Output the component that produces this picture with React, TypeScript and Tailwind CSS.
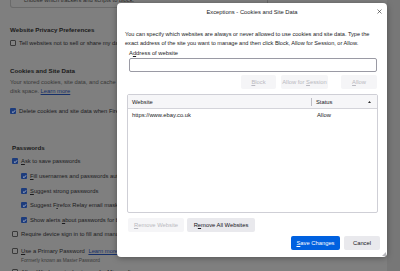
import React from "react";

const font = { fontFamily: '"Liberation Sans", Arial, sans-serif' };

function PageBox({ checked }: { checked?: boolean }) {
  return checked ? (
    <span className="flex h-[6px] w-[6px] shrink-0 items-center justify-center rounded-[1px] bg-[#1d3c7c]">
      <svg width="5" height="5" viewBox="0 0 10 10">
        <path d="M2 5.2 L4.2 7.3 L8 2.8" fill="none" stroke="#c9cdd6" strokeWidth="1.6" />
      </svg>
    </span>
  ) : (
    <span className="h-[6px] w-[6px] shrink-0 rounded-[1px] border border-[#3a3a3a] bg-[#828282]" />
  );
}

function PageRow({
  checked,
  indent,
  children,
  top,
}: {
  checked?: boolean;
  indent: string;
  children: React.ReactNode;
  top: string;
}) {
  return (
    <div className={`flex items-center gap-[3px] whitespace-nowrap ${indent} ${top}`}>
      <PageBox checked={checked} />
      <span>{children}</span>
    </div>
  );
}

function Btn({
  children,
  w,
  kind = "normal",
}: {
  children: React.ReactNode;
  w: string;
  kind?: "normal" | "disabled" | "primary";
}) {
  const look =
    kind === "primary"
      ? "bg-[#0061e0] text-white"
      : kind === "disabled"
      ? "bg-[#f5f5f7] text-[#b9b9c0]"
      : "bg-[#e9e9ed] text-[#15141a]";
  return (
    <div
      className={`flex h-[14px] items-center justify-center whitespace-nowrap rounded-[2px] ${w} ${look}`}
    >
      {children}
    </div>
  );
}

export default function App() {
  return (
    <div
      className="relative h-[271px] w-[400px] overflow-hidden bg-[#7f7f7f] text-[5.8px] leading-[8px] text-[#1b1b1d]"
      style={font}
    >
      {/* settings page behind the dialog */}
      <div className="flex flex-col">
        <div className="ml-[10px] h-[8px] w-[258px] rounded-b-[3px] border-x border-b border-[#6a6a6a]">
          <div className="ml-[13px] -mt-[4px] text-[#2a2a2a]">choose which trackers and scripts to block.</div>
        </div>

        <div className="ml-[10px] mt-[18px] text-[6.2px] font-bold text-[#1a1a1a]">
          Website Privacy Preferences
        </div>
        <PageRow indent="ml-[10px]" top="mt-[5px]">
          Tell websites not to sell or share my data
        </PageRow>

        <div className="ml-[10px] mt-[20px] text-[6.2px] font-bold text-[#1a1a1a]">Cookies and Site Data</div>
        <div className="ml-[10px] mt-[3px] text-[#383838]">
          Your stored cookies, site data, and cache are currently using
        </div>
        <div className="ml-[10px] mt-[1px] text-[#383838]">
          disk space. <span className="text-[#16306a] underline">Learn more</span>
        </div>
        <PageRow checked indent="ml-[10px]" top="mt-[12px]">
          Delete cookies and site data when Firefox is closed
        </PageRow>

        <div className="ml-[12px] mt-[29px] text-[6.2px] font-bold text-[#1a1a1a]">Passwords</div>
        <PageRow checked indent="ml-[12px]" top="mt-[5px]">
          <span className="underline decoration-[0.5px]">A</span>sk to save passwords
        </PageRow>
        <PageRow checked indent="ml-[21px]" top="mt-[7px]">
          <span className="underline decoration-[0.5px]">F</span>ill usernames and passwords automatically
        </PageRow>
        <PageRow checked indent="ml-[21px]" top="mt-[7px]">
          <span className="underline decoration-[0.5px]">S</span>uggest strong passwords
        </PageRow>
        <PageRow checked indent="ml-[21px]" top="mt-[6px]">
          Suggest F<span className="underline decoration-[0.5px]">i</span>refox Relay email masks to protect
        </PageRow>
        <PageRow checked indent="ml-[21px]" top="mt-[7px]">
          Show alerts <span className="underline decoration-[0.5px]">a</span>bout passwords for breached websites
        </PageRow>
        <PageRow indent="ml-[12px]" top="mt-[6px]">
          Require device sign in to fill and manage passwords
        </PageRow>
        <PageRow indent="ml-[12px]" top="mt-[9px]">
          <span>
            <span className="underline decoration-[0.5px]">U</span>se a Primary Password{" "}
            <span className="ml-[2px] text-[#16306a] underline">Learn more</span>
          </span>
        </PageRow>
        <div className="ml-[21px] mt-[2px] text-[4.8px] text-[#3a3a3a]">Formerly known as Master Password</div>
        <PageRow indent="ml-[12px]" top="mt-[3px]">
          Allow Windows single sign-on for Microsoft
        </PageRow>
      </div>

      {/* darker strip at right edge */}
      <div className="absolute right-0 top-0 h-full w-[13px] bg-[#777777]" />

      {/* exceptions dialog */}
      <div className="absolute left-[117px] top-[3px] flex h-[254px] w-[270px] flex-col rounded-[4px] bg-white shadow-[0_1px_6px_rgba(0,0,0,0.35)]">
        <div className="relative flex h-[18px] shrink-0 items-center justify-center text-[#1b1b1d]">
          Exceptions - Cookies and Site Data
          <svg className="absolute right-[5px] top-[6px]" width="5" height="5" viewBox="0 0 10 10">
            <path d="M1 1 L9 9 M9 1 L1 9" stroke="#2b2b2b" strokeWidth="1.2" />
          </svg>
        </div>

        <div className="flex flex-1 flex-col pl-[8px] pr-[8px] pt-[9px]">
          <p className="text-[5.6px] leading-[8.5px] text-[#1b1b1d]">
            You can specify which websites are always or never allowed to use cookies and site data. Type the exact
            address of the site you want to manage and then click Block, Allow for Session, or Allow.
          </p>
          <div className="ml-[4px] mt-[2px]">
            A<span className="underline decoration-[0.5px]">d</span>dress of website
          </div>
          <div className="ml-[4px] mt-[1px] h-[14px] w-[248px] rounded-[2px] border border-[#9a9aa4]" />

          <div className="mr-[2px] mt-[3px] flex justify-end">
            <Btn w="w-[35px]" kind="disabled">
              <span className="underline decoration-[0.5px]">B</span>lock
            </Btn>
            <div className="ml-[5px]">
              <Btn w="w-[47px]" kind="disabled">
                Allow for&nbsp;<span className="underline decoration-[0.5px]">S</span>ession
              </Btn>
            </div>
            <div className="ml-[13px]">
              <Btn w="w-[36px]" kind="disabled">
                <span className="underline decoration-[0.5px]">A</span>llow
              </Btn>
            </div>
          </div>

          <div className="ml-[2px] mt-[5px] flex h-[119px] w-[251px] flex-col rounded-[2px] border border-[#cfcfd6]">
            <div className="flex h-[14px] shrink-0 items-center border-b border-[#d4d4da] bg-[#f6f6f8]">
              <div className="flex w-[184px] items-center border-r border-[#bdbdc4] pl-[4px] leading-[8px]">
                Website
              </div>
              <div className="flex flex-1 items-center justify-between pl-[4px] pr-[6px]">
                Status
                <svg width="3" height="2" viewBox="0 0 6 4">
                  <path d="M0 4 L3 0 L6 4 Z" fill="#2b2b2b" />
                </svg>
              </div>
            </div>
            <div className="mt-[2px] flex h-[8px] items-center">
              <div className="w-[184px] pl-[4px]">https://www.ebay.co.uk</div>
              <div className="pl-[5px]">Allow</div>
            </div>
          </div>

          <div className="ml-[3px] mt-[5px] flex gap-[3px]">
            <Btn w="w-[56px]" kind="disabled">
              <span className="underline decoration-[0.5px]">R</span>emove Website
            </Btn>
            <Btn w="w-[68px]">
              R<span className="underline decoration-[0.5px]">e</span>move All Websites
            </Btn>
          </div>

          <div className="-mr-[1px] mt-[4px] flex justify-end gap-[4px]">
            <Btn w="w-[49px]" kind="primary">
              <span className="underline decoration-[0.5px]">S</span>ave Changes
            </Btn>
            <Btn w="w-[36px]">Cancel</Btn>
          </div>
        </div>

        <svg className="absolute bottom-[1px] right-[1px]" width="4" height="4" viewBox="0 0 4 4">
          <path d="M4 0 L4 4 L0 4 Z" fill="#b8b8bd" />
        </svg>
      </div>
    </div>
  );
}
